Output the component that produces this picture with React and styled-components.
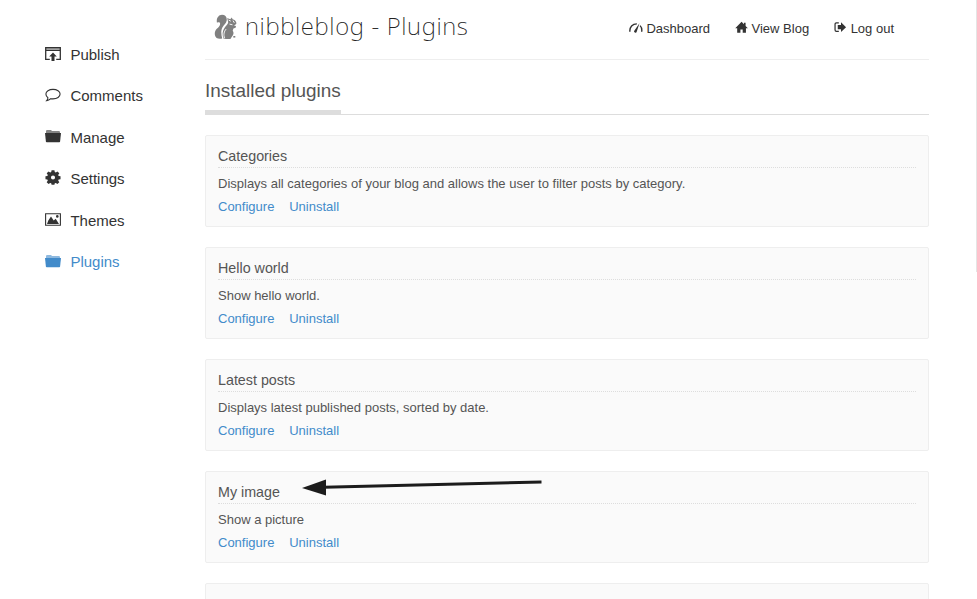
import React from "react";
import styled, { createGlobalStyle } from "styled-components";

const GlobalStyle = createGlobalStyle`
  * { box-sizing: border-box; }
  html, body { margin: 0; padding: 0; background: #fff; }
  body {
    font-family: "Liberation Sans", Arial, sans-serif;
    font-size: 13px;
    color: #555;
    overflow: hidden;
  }
`;

const Page = styled.div`
  display: flex;
  width: 977px;
  height: 599px;
  overflow: hidden;
`;

const Sidebar = styled.nav`
  display: flex;
  flex-direction: column;
  width: 205px;
  padding: 33.6px 0 0 45px;
`;

const SideLink = styled.a`
  display: flex;
  align-items: center;
  gap: 9.4px;
  height: 41.45px;
  font-size: 15px;
  color: ${(p) => (p.$active ? "#428bca" : "#333")};
  text-decoration: none;

  svg { margin-top: -1.4px; }
`;

const Main = styled.main`
  width: 724px;
`;

const Header = styled.header`
  display: flex;
  justify-content: space-between;
  height: 60px;
  border-bottom: 1px solid #eee;
  padding: 0 35px 0 9px;
`;

const Brand = styled.div`
  display: flex;
  gap: 7px;
  padding-top: 14px;
`;

const BrandTitle = styled.h1`
  margin: -6px 0 0;
  font-family: "Noto Sans", "Open Sans", sans-serif;
  font-size: 24px;
  font-weight: 200;
  line-height: 36px;
  letter-spacing: 0.63px;
  color: #222;
  white-space: nowrap;
`;

const TopNav = styled.div`
  display: flex;
  gap: 24.5px;
  padding-top: 21px;
`;

const TopLink = styled.a`
  display: flex;
  gap: 3px;
  height: 15px;
  line-height: 15px;
  color: #333;
  white-space: nowrap;
`;

const Section = styled.div`
  display: flex;
  height: 55px;
  border-bottom: 1px solid #ddd;
`;

const SectionTitle = styled.h2`
  margin: 0;
  height: 55px;
  padding-top: 20px;
  border-bottom: 5px solid #ddd;
  font-size: 18.95px;
  line-height: 22px;
  font-weight: 400;
  color: #555;
`;

const PluginList = styled.div`
  display: flex;
  flex-direction: column;
  gap: 20px;
  padding-top: 20px;
`;

const Card = styled.article`
  height: 92px;
  padding: 12px;
  border: 1px solid #eee;
  border-radius: 2px;
  background: #fafafa;
`;

const CardTitle = styled.h3`
  margin: 0;
  height: 20px;
  font-size: 14.3px;
  line-height: 16px;
  font-weight: 400;
  border-bottom: 1px dotted #ddd;
`;

const Description = styled.p`
  margin: 8px 0;
  line-height: 15px;
`;

const Actions = styled.div`
  display: flex;
  gap: 14.8px;
  line-height: 15px;
`;

const Action = styled.a`
  color: #428bca;
`;

const MarkedCard = styled(Card)`
  position: relative;
`;

const Arrow = styled.svg`
  position: absolute;
  left: 94px;
  top: 3px;
`;

const RightEdge = styled.aside`
  width: 1px;
  height: 272px;
  margin-left: 47px;
  background: #e5e5e5;
`;

const Icon = ({ size = 16, viewBox = "0 0 16 16", children }) => (
  <svg width={size} height={size} viewBox={viewBox} fill="currentColor">
    {children}
  </svg>
);

const PublishIcon = () => (
  <Icon>
    <path d="M1 2h14v2H1z" opacity=".45" />
    <path d="M4.800 13.300H.7V1.700h14.600v11.600h-4.100" fill="none" stroke="currentColor" strokeWidth="1.300" />
    <path d="M1 4.500h14" stroke="currentColor" strokeWidth="1" />
    <path d="M8 6.500l3.800 4H9.500V15h-3v-4.500H4.200z" />
  </Icon>
);

const CommentIcon = () => (
  <Icon>
    <path
      d="M8 2.400c4 0 7.100 2 7.100 4.700s-3 4.800-7.100 4.800c-.8 0-1.500-.1-2.200-.2C4.600 12.800 3.200 13.600 1.700 13.700c.8-.8 1.200-1.700 1.200-2.900C1.600 9.900.9 8.600.9 7.100.9 4.400 4 2.400 8 2.400z"
      fill="none"
      stroke="currentColor"
      strokeWidth="1.100"
    />
  </Icon>
);

const FolderIcon = () => (
  <Icon>
    <path d="M1 5V2.700L1.800 1.900H6l1 1h7.200l.8.8V5z" opacity=".6" />
    <path d="M0 5h16l-.9 8.500q-.1.700-.8.700H1.700q-.7 0-.8-.7z" />
  </Icon>
);

const GearIcon = () => (
  <Icon viewBox="-.5 -.2 17 17">
    <path
      fillRule="evenodd"
      d="M6.500 0h3l.4 2 1.100.5 1.700-1.200 2 2-1.200 1.700.5 1.100 2 .4v3l-2 .4-.5 1.100 1.200 1.700-2 2-1.700-1.200-1.100.5-.4 1.400h-3l-.4-1.400-1.100-.5-1.700 1.200-2-2 1.200-1.700-.5-1.100-2-.4v-3l2-.4.5-1.100-1.200-1.700 2-2L5 2.500l1.100-.5zM8 5.600A2.200 2.200 0 108 10a2.200 2.200 0 000-4.400z"
    />
  </Icon>
);

const ImageIcon = () => (
  <Icon>
    <path d="M.6 2.800h14.800v11.500H.6z" fill="none" stroke="currentColor" strokeWidth="1.100" />
    <path d="M2 12.900l1.300-3.500L6 5.400l2.700 4 2-1.700 3.300 5.200z" />
    <circle cx="12.300" cy="5.400" r="1.300" />
  </Icon>
);

const GaugeIcon = () => (
  <Icon size={14}>
    <path
      d="M1 12.300C.5 7 4 3.300 9 3.300M12.700 5.300c1.600 1.700 2.200 4.300 1.800 7"
      fill="none"
      stroke="currentColor"
      strokeWidth="1.600"
    />
    <path d="M12 2.500L8.800 12.200a1.500 1.500 0 11-2.600-1.300z" />
  </Icon>
);

const HomeIcon = () => (
  <Icon size={14}>
    <path d="M7.500.8L.3 8.200h2.200v5.300h3.700V9.600h2.600v3.900h3.700V8.200h2.200L12.100 5.600V2h-1.900v1.700z" />
  </Icon>
);

const LogoutIcon = () => (
  <Icon size={14}>
    <path
      d="M5.500 2.200H2.800Q1.200 2.200 1.200 3.800v6.500q0 1.600 1.600 1.600h2.700"
      fill="none"
      stroke="currentColor"
      strokeWidth="1.400"
    />
    <path d="M8 1.300L13.800 7 8 12.700V9.500H4.300v-5H8z" />
  </Icon>
);

const SquirrelLogo = () => (
  <svg width="24" height="26" viewBox="0 0 24 26" fill="#808080">
    <path d="M2.600 24C-.2 21 .5 17.300 2.800 14.800 4.600 13 6.300 11.600 6.100 9.600 5.900 8.200 4.500 8 3 8.800 2 5 4.300.8 8 .8c3.300 0 5.200 2.400 4.700 5.600-.5 3-2.700 4.200-4.200 6.800-1.800 3.300-1.300 7.500-.3 11.200-2.200.4-4.200.3-5.600-.4z" />
    <path d="M14.200 8.300l-1-4.300 3 1.200 1.600-1.700.8 1.800c2 .3 3.400 1.600 3.900 4-.6 1.300-1.500 2-2.700 2.200l2.200.4-.4 1.900-2.200.7-.7 2.300c1.300 1.800 1 3.700-.5 5.500l-1.800 2.700H9.800c-1.800-4-1.500-8.200.8-11.300 1.400-1.900 3.300-3.100 3.600-5.400z" />
    <path
      d="M14.600 6l2.200 1.200M15.500 10.100l3 .7M19 6.600l1.300 2.200M10.700 24.500c-1.600-4-.5-7.300 1.500-9.500"
      fill="none"
      stroke="#fff"
      strokeWidth=".9"
    />
    <path d="M19.300 22h2v1.600h-2z" />
  </svg>
);

const menu = [
  { label: "Publish", icon: PublishIcon },
  { label: "Comments", icon: CommentIcon },
  { label: "Manage", icon: FolderIcon },
  { label: "Settings", icon: GearIcon },
  { label: "Themes", icon: ImageIcon },
  { label: "Plugins", icon: FolderIcon, active: true },
];

const plugins = [
  {
    name: "Categories",
    text: "Displays all categories of your blog and allows the user to filter posts by category.",
  },
  { name: "Hello world", text: "Show hello world." },
  { name: "Latest posts", text: "Displays latest published posts, sorted by date." },
  { name: "My image", text: "Show a picture", marked: true },
];

const Plugin = ({ name, text, marked }) => {
  const Box = marked ? MarkedCard : Card;
  return (
    <Box>
      <CardTitle>{name}</CardTitle>
      <Description>{text}</Description>
      <Actions>
        <Action>Configure</Action>
        <Action>Uninstall</Action>
      </Actions>
      {marked && (
        <Arrow width="246" height="24" viewBox="0 0 246 24">
          <path d="M24 12.300L241.500 7" stroke="#1c1c1c" strokeWidth="3" />
          <path d="M2 13L26 4.500v16z" fill="#1c1c1c" />
        </Arrow>
      )}
    </Box>
  );
};

export default function App() {
  return (
    <>
      <GlobalStyle />
      <Page>
        <Sidebar>
          {menu.map(({ label, icon: Glyph, active }) => (
            <SideLink key={label} $active={active}>
              <Glyph />
              {label}
            </SideLink>
          ))}
        </Sidebar>
        <Main>
          <Header>
            <Brand>
              <SquirrelLogo />
              <BrandTitle>nibbleblog - Plugins</BrandTitle>
            </Brand>
            <TopNav>
              <TopLink><GaugeIcon />Dashboard</TopLink>
              <TopLink><HomeIcon />View Blog</TopLink>
              <TopLink><LogoutIcon />Log out</TopLink>
            </TopNav>
          </Header>
          <Section>
            <SectionTitle>Installed plugins</SectionTitle>
          </Section>
          <PluginList>
            {plugins.map((plugin) => (
              <Plugin key={plugin.name} {...plugin} />
            ))}
            <Card />
          </PluginList>
        </Main>
        <RightEdge />
      </Page>
    </>
  );
}
